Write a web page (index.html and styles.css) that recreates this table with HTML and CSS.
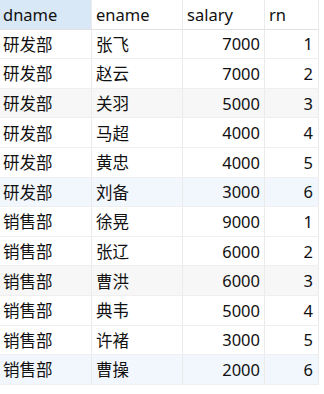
FILE: index.html
```html
<!DOCTYPE html>
<html lang="zh">
<head>
<meta charset="utf-8">
<title>result</title>
<link rel="stylesheet" href="styles.css">
</head>
<body>
<div class="grid">
  <div class="row head">
    <div class="cell c1 sel">dname</div><div class="cell c2">ename</div><div class="cell c3">salary</div><div class="cell c4">rn</div>
  </div>
  <div class="row"><div class="cell c1">研发部</div><div class="cell c2">张飞</div><div class="cell c3 num">7000</div><div class="cell c4 num">1</div></div>
  <div class="row"><div class="cell c1">研发部</div><div class="cell c2">赵云</div><div class="cell c3 num">7000</div><div class="cell c4 num">2</div></div>
  <div class="row gray"><div class="cell c1">研发部</div><div class="cell c2">关羽</div><div class="cell c3 num">5000</div><div class="cell c4 num">3</div></div>
  <div class="row"><div class="cell c1">研发部</div><div class="cell c2">马超</div><div class="cell c3 num">4000</div><div class="cell c4 num">4</div></div>
  <div class="row"><div class="cell c1">研发部</div><div class="cell c2">黄忠</div><div class="cell c3 num">4000</div><div class="cell c4 num">5</div></div>
  <div class="row blue"><div class="cell c1">研发部</div><div class="cell c2">刘备</div><div class="cell c3 num">3000</div><div class="cell c4 num">6</div></div>
  <div class="row"><div class="cell c1">销售部</div><div class="cell c2">徐晃</div><div class="cell c3 num">9000</div><div class="cell c4 num">1</div></div>
  <div class="row"><div class="cell c1">销售部</div><div class="cell c2">张辽</div><div class="cell c3 num">6000</div><div class="cell c4 num">2</div></div>
  <div class="row gray"><div class="cell c1">销售部</div><div class="cell c2">曹洪</div><div class="cell c3 num">6000</div><div class="cell c4 num">3</div></div>
  <div class="row"><div class="cell c1">销售部</div><div class="cell c2">典韦</div><div class="cell c3 num">5000</div><div class="cell c4 num">4</div></div>
  <div class="row"><div class="cell c1">销售部</div><div class="cell c2">许褚</div><div class="cell c3 num">3000</div><div class="cell c4 num">5</div></div>
  <div class="row blue"><div class="cell c1">销售部</div><div class="cell c2">曹操</div><div class="cell c3 num">2000</div><div class="cell c4 num">6</div></div>
</div>
</body>
</html>
```
FILE: styles.css
```css
html, body {
  margin: 0;
  padding: 0;
  background: #ffffff;
}
body {
  font-family: "Noto Sans", "Noto Sans CJK SC", sans-serif;
  font-size: 16.5px;
  color: #111111;
}
.grid {
  display: flex;
  flex-direction: column;
  width: 319px;
}
.row {
  display: flex;
  height: 29.6px;
  box-sizing: border-box;
  border-bottom: 1px solid #efefef;
}
.row.head {
  border-bottom: 1px solid #e2e2e2;
}
.row.gray { background: #f7f7f7; }
.row.blue { background: #f2f7fd; }
.cell {
  box-sizing: border-box;
  border-right: 1px solid #ebebeb;
  display: flex;
  align-items: center;
  padding: 0 4px 0 3px;
  white-space: nowrap;
  overflow: hidden;
}
.c1 { width: 92px; }
.c2 { width: 91px; }
.c3 { width: 82px; }
.c4 { width: 54px; }
.c2, .c3, .c4 { padding-left: 4px; }
.c4 { padding-right: 5px; }
.num { justify-content: flex-end; }
.sel { background: #d9e8f7; }
```
